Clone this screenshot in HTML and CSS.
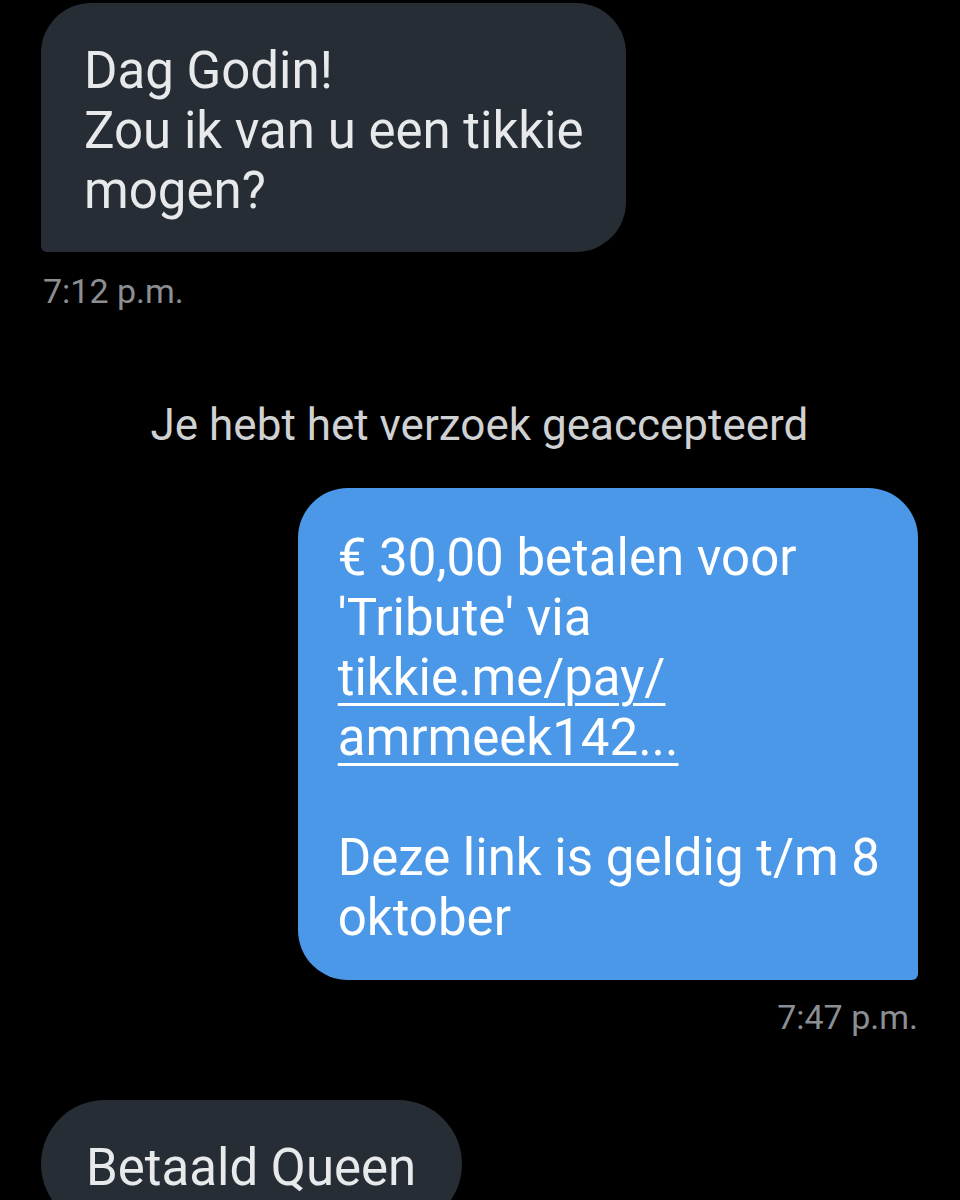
FILE: index.html
```html
<!DOCTYPE html>
<html lang="nl">
<head>
<meta charset="utf-8">
<link rel="stylesheet" href="styles.css">
</head>
<body>
<main class="chat">
  <div class="msg msg-in">
    <div class="bubble bubble-dark bubble-first">Dag Godin!<br>Zou ik van u een tikkie<br>mogen?</div>
    <div class="time">7:12 p.m.</div>
  </div>
  <div class="system">Je hebt het verzoek geaccepteerd</div>
  <div class="msg msg-out">
    <div class="bubble bubble-blue">€ 30,00 betalen voor<br>'Tribute' via<br><a class="link" href="#">tikkie.me/pay/<br>amrmeek142...</a><br><br>Deze link is geldig t/m 8<br>oktober</div>
    <div class="time">7:47 p.m.</div>
  </div>
  <div class="msg msg-in">
    <div class="bubble bubble-dark bubble-pill">Betaald Queen</div>
  </div>
</main>
</body>
</html>
```

FILE: styles.css
```css
html, body {
  margin: 0;
  padding: 0;
  background: #000;
}
body {
  width: 960px;
  height: 1200px;
  overflow: hidden;
  font-family: Roboto, "Noto Sans", sans-serif;
}
.chat {
  display: flex;
  flex-direction: column;
  padding: 3px 42px 0 41px;
}
.msg {
  display: flex;
  flex-direction: column;
}
.msg-in { align-items: flex-start; }
.msg-out { align-items: flex-end; }
.bubble {
  font-size: 51px;
  line-height: 60px;
  white-space: nowrap;
}
.bubble-dark {
  background: #262d34;
  color: #e7e9ea;
}
.bubble-first {
  padding: 38px 42px 31px 43px;
  border-radius: 50px 50px 50px 6px;
}
.bubble-blue {
  background: #4a98e7;
  color: #ffffff;
  padding: 40px 38px 32px 40px;
  border-radius: 50px 50px 6px 50px;
}
.link {
  color: #ffffff;
  text-decoration: underline;
  text-decoration-thickness: 3px;
  text-underline-offset: 8px;
}
.time {
  font-size: 34px;
  line-height: 40px;
  color: #8b8f93;
  margin-top: 19px;
  padding: 0 2px;
}
.msg-out .time {
  margin-top: 17px;
  padding: 0;
}
.system {
  text-align: center;
  font-size: 44px;
  line-height: 52px;
  color: #cfd1d3;
  margin: 88px 0 37px;
}
.bubble-pill {
  margin-top: 63px;
  padding: 38px 46px 30px 45px;
  border-radius: 64px;
}
```
